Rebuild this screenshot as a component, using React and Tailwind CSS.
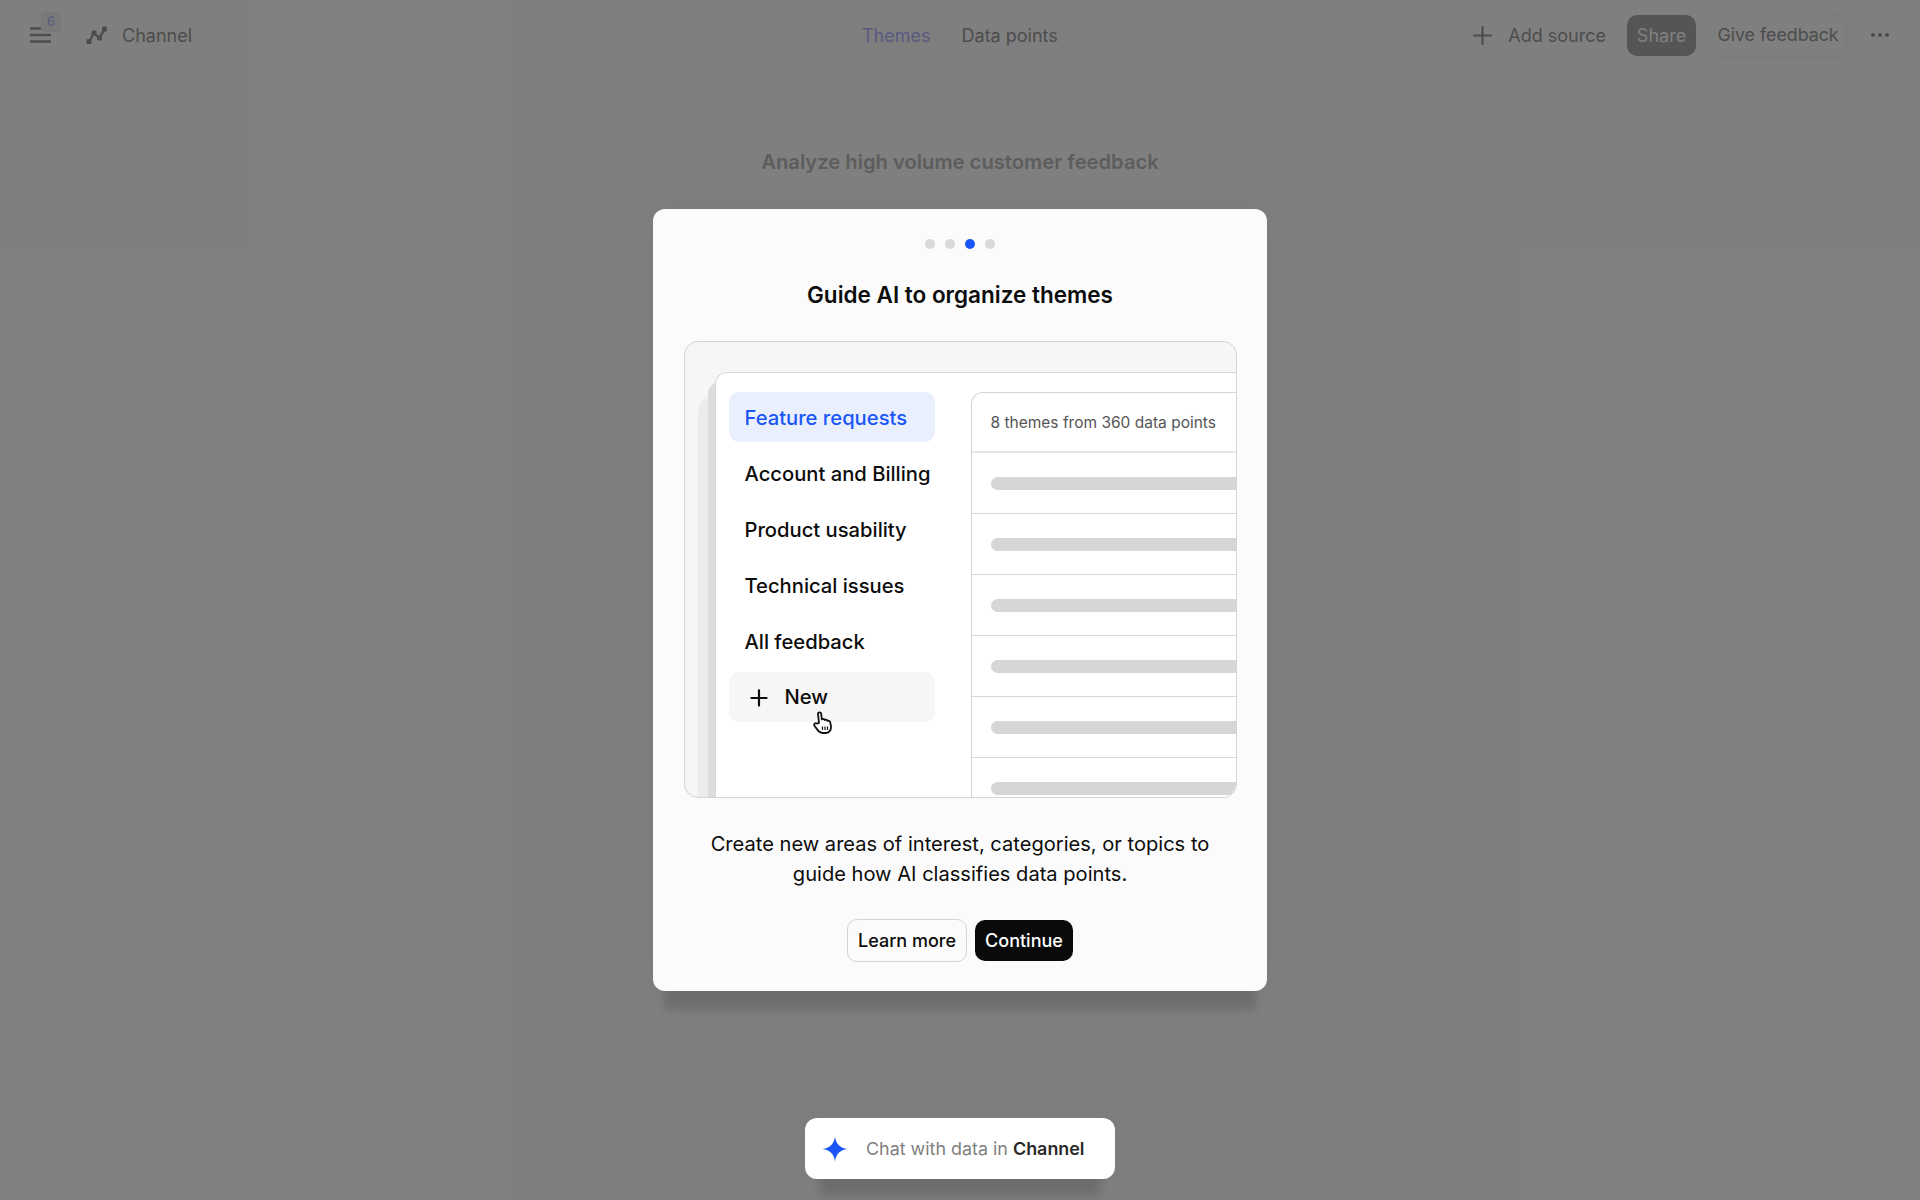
import { Plus, MoreHorizontal } from 'lucide-react';

const font = { fontFamily: 'Inter, "Liberation Sans", sans-serif' };

function Logo() {
  return (
    <svg width="22" height="19" viewBox="0 0 22 19" className="text-[#9a9a9a]">
      <path d="M3 16 L8 7 L13 12 L19 3" fill="none" stroke="currentColor" strokeWidth="2.4" />
      <rect x="0.5" y="13" width="5" height="5" rx="1" fill="currentColor" />
      <rect x="5.5" y="4.5" width="5" height="5" rx="1" fill="currentColor" />
      <rect x="11" y="9.5" width="5" height="5" rx="1" fill="currentColor" />
      <rect x="16" y="0.5" width="5" height="5" rx="1" fill="currentColor" />
    </svg>
  );
}

function Sparkle() {
  return (
    <svg width="26" height="26" viewBox="0 0 26 26">
      <path d="M13 0.5 C14 8 18 12 25.5 13 C18 14 14 18 13 25.5 C12 18 8 14 0.5 13 C8 12 12 8 13 0.5 Z" fill="#1a56f5" />
    </svg>
  );
}

function HandCursor() {
  return (
    <svg width="20" height="23" viewBox="0 0 20 23" className="absolute left-[84px] top-[39px]">
      <path
        d="M6 12 L5 3 C5 .8 8 .8 8.2 3 L8.8 8.5 C9.6 7.6 11.2 7.8 11.6 9 C12.4 8.3 14 8.6 14.3 9.9 C15.2 9.4 16.8 9.8 17.2 11.2 L18 15.5 C18.3 19 16 22 12.5 22 L9.5 22 C7 22 5.5 20.5 4.3 18.6 L1.5 14.8 C.4 13 2.6 11.3 4 12.6 Z"
        fill="#fff"
        stroke="#111"
        strokeWidth="1.8"
        strokeLinejoin="round"
      />
      <path d="M9.5 15.5 V19 M12 15.5 V19 M14.5 15.5 V19" stroke="#111" strokeWidth="1.2" />
    </svg>
  );
}

const themes = ['Account and Billing', 'Product usability', 'Technical issues', 'All feedback'];

export default function App() {
  return (
    <div className="relative h-[1200px] w-full overflow-hidden bg-white" style={font}>
      {/* page behind the overlay */}
      <header className="flex h-[70px] items-center pl-[30px] pr-[28px] text-[18px] text-[#9a9a9a]">
        <div className="flex w-[820px] items-center">
          <div className="relative">
            <svg width="21" height="16" viewBox="0 0 21 16" className="text-[#9a9a9a]">
              <path d="M0 1.5 H13 M0 8 H21 M0 14.5 H21" stroke="currentColor" strokeWidth="2.4" />
            </svg>
            <span className="absolute -top-[15px] left-[11px] flex h-[20px] w-[20px] items-center justify-center rounded bg-[#f2f2f2] text-[13px] text-[#b4b4ff]">6</span>
          </div>
          <div className="ml-[35px]"><Logo /></div>
          <span className="ml-[14px]">Channel</span>
        </div>
        <div className="flex items-center">
          <span className="rounded-lg bg-[#fcfcfc] px-[12px] py-[8px] text-[#b4b4ff]">Themes</span>
          <span className="ml-[19px]">Data points</span>
        </div>
        <div className="ml-auto flex items-center">
          <Plus size={29} strokeWidth={1.8} />
          <span className="ml-[11px]">Add source</span>
          <span className="ml-[21px] flex h-[41px] w-[69px] items-center justify-center rounded-[10px] bg-[#aaaaaa] text-[#fff]">Share</span>
          <span className="ml-[13px] flex h-[43px] w-[138px] items-center justify-center rounded-[10px] border border-[#f4f4f4] pt-px text-[17.8px]">Give feedback</span>
          <MoreHorizontal size={24} className="ml-[21px]" />
        </div>
      </header>
      <h1 className="mt-[77px] text-center text-[20.2px] font-semibold text-[#bababa]">Analyze high volume customer feedback</h1>

      {/* dimmed overlay with the onboarding dialog */}
      <div className="absolute inset-0 flex justify-center bg-black/50 pt-[209px]">
        <div className="flex h-[782px] w-[614px] flex-col items-center rounded-[12px] bg-[#fbfbfb] px-[31px] pt-[30px] shadow-[0_30px_8px_-11px_rgba(0,0,0,0.13),0_0_28px_rgba(0,0,0,0.05)]">
          <div className="flex gap-[10px]">
            <span className="h-[10px] w-[10px] rounded-full bg-[#d9d9d9]" />
            <span className="h-[10px] w-[10px] rounded-full bg-[#d9d9d9]" />
            <span className="h-[10px] w-[10px] rounded-full bg-[#1a56f5]" />
            <span className="h-[10px] w-[10px] rounded-full bg-[#d9d9d9]" />
          </div>
          <h2 className="mt-[29px] text-[22.5px] font-semibold leading-[34px] text-[#0c0c0c]">Guide AI to organize themes</h2>

          <div className="relative mt-[29px] h-[457px] w-[553px] shrink-0 overflow-hidden rounded-[14px] border border-[#d4d4d4] bg-[#f6f6f6] pl-[30px] pt-[30px]">
            <div className="absolute bottom-0 left-[13px] top-[50px] w-[24px] rounded-tl-[22px] bg-[#ececec]" />
            <div className="absolute bottom-0 left-[23px] top-[40px] w-[12px] rounded-tl-[12px] bg-[#dcdcdc]" />
            <div className="relative flex h-[430px] w-[560px] rounded-tl-[12px] border-l border-t border-[#d8d8d8] bg-white pl-[13px] pt-[19px]">
              <div className="relative flex w-[206px] shrink-0 flex-col gap-[6px]">
                <div className="flex h-[50px] items-center rounded-[10px] bg-[#e9effd] pl-[16px] pt-[2px] text-[20.2px] font-medium text-[#1a56f5]">Feature requests</div>
                {themes.map((t) => (
                  <div key={t} className="flex h-[50px] items-center pl-[16px] pt-[2px] text-[20.2px] font-medium text-[#0c0c0c]">{t}</div>
                ))}
                <div className="relative flex h-[50px] items-center rounded-[10px] bg-[#f6f6f6] pl-[17px] pt-px text-[20.2px] font-medium text-[#0c0c0c]">
                  <Plus size={26} strokeWidth={2} />
                  <span className="ml-[13px]">New</span>
                  <HandCursor />
                </div>
              </div>
              <div className="ml-[36px] flex-1 rounded-tl-[12px] border-l border-t border-[#d4d4d4]">
                <div className="flex h-[60px] items-center border-b-2 border-[#e6e6e6] pl-[19px] pt-px text-[15.5px] text-[#555555]">8 themes from 360 data points</div>
                {[0, 1, 2, 3, 4, 5].map((i) => (
                  <div key={i} className="flex h-[61px] items-center border-b border-[#d8d8d8] pl-[19px]">
                    <div className="h-[13px] w-full rounded-l-full bg-[#d6d6d6]" />
                  </div>
                ))}
              </div>
            </div>
          </div>

          <p className="mt-[31px] w-[520px] text-center text-[20.1px] leading-[30px] text-[#0c0c0c]">
            Create new areas of interest, categories, or topics to guide how AI classifies data points.
          </p>
          <div className="mt-[30px] flex items-center gap-[8px]">
            <button className="h-[43px] w-[120px] rounded-[10px] border border-[#d4d4d4] text-[18px] font-medium text-[#0c0c0c]">Learn more</button>
            <button className="h-[41px] w-[98px] rounded-[10px] bg-[#0a0a0a] text-[18px] font-medium text-white">Continue</button>
          </div>
        </div>
      </div>

      {/* chat bar sits above the overlay */}
      <div className="absolute bottom-[21px] left-[805px] flex h-[61px] w-[310px] items-center rounded-[12px] bg-white pl-[17px] text-[17.9px] text-[#808080] shadow-[0_33px_10px_-15px_rgba(0,0,0,0.13),0_0_18px_rgba(0,0,0,0.05)]">
        <Sparkle />
        <span className="ml-[18px] pt-px">Chat with data in <span className="font-semibold text-[#2a2a2a]">Channel</span></span>
      </div>
    </div>
  );
}
